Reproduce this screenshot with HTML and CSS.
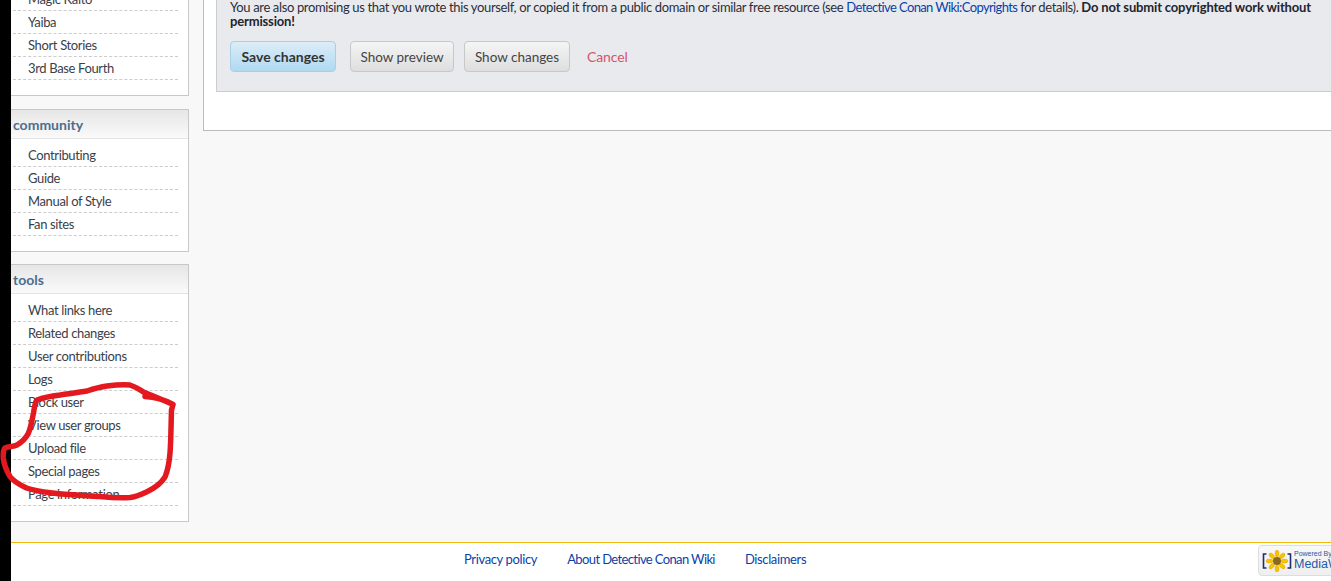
FILE: index.html
```html
<!DOCTYPE html>
<html lang="en">
<head>
<meta charset="utf-8">
<title>Detective Conan Wiki</title>
<link rel="stylesheet" href="styles.css">
</head>
<body>
<div class="strip"></div>
<div class="page">
  <div class="main">
    <aside class="sidebar">
      <section class="box box-first">
        <ul class="list">
          <li>Magic Kaito</li>
          <li>Yaiba</li>
          <li>Short Stories</li>
          <li>3rd Base Fourth</li>
        </ul>
      </section>
      <section class="box">
        <h3 class="box-title">community</h3>
        <ul class="list">
          <li>Contributing</li>
          <li>Guide</li>
          <li>Manual of Style</li>
          <li>Fan sites</li>
        </ul>
      </section>
      <section class="box">
        <h3 class="box-title">tools</h3>
        <ul class="list">
          <li>What links here</li>
          <li>Related changes</li>
          <li>User contributions</li>
          <li>Logs</li>
          <li>Block user</li>
          <li>View user groups</li>
          <li>Upload file</li>
          <li>Special pages</li>
          <li>Page information</li>
        </ul>
      </section>
    </aside>
    <main class="content">
      <div class="edit-panel">
        <p class="notice">You are also promising us that you wrote this yourself, or copied it from a public domain or similar free resource (see <a class="link link-tight" href="#">Detective Conan Wiki:Copyrights</a> for details). <strong>Do not submit copyrighted work without permission!</strong></p>
        <div class="actions">
          <button class="btn btn-save">Save changes</button>
          <button class="btn btn-preview">Show preview</button>
          <button class="btn btn-diff">Show changes</button>
          <a class="cancel" href="#">Cancel</a>
        </div>
      </div>
    </main>
  </div>
  <footer class="footer">
    <nav class="footer-links">
      <a class="link" href="#">Privacy policy</a>
      <a class="link link-tight" href="#">About Detective Conan Wiki</a>
      <a class="link" href="#">Disclaimers</a>
    </nav>
    <div class="badge">
      <svg class="badge-logo" width="30" height="22" viewBox="0 0 30 22" aria-hidden="true">
        <path d="M4.5 4H1.5V18H4.5M25.5 4H28.5V18H25.5" fill="none" stroke="#1d2f6f" stroke-width="1.6"/>
        <g fill="#f6c400" stroke="#e59a00" stroke-width=".4">
          <ellipse cx="15" cy="3.5" rx="2" ry="3.5"/>
          <ellipse cx="15" cy="18.500" rx="2" ry="3.500"/>
          <ellipse cx="7.500" cy="11" rx="3.500" ry="2"/>
          <ellipse cx="22.500" cy="11" rx="3.500" ry="2"/>
          <ellipse cx="9.800" cy="5.800" rx="2" ry="3.300" transform="rotate(-45 9.800 5.800)"/>
          <ellipse cx="20.200" cy="5.800" rx="2" ry="3.300" transform="rotate(45 20.200 5.800)"/>
          <ellipse cx="9.800" cy="16.200" rx="2" ry="3.300" transform="rotate(45 9.800 16.200)"/>
          <ellipse cx="20.200" cy="16.200" rx="2" ry="3.300" transform="rotate(-45 20.200 16.200)"/>
        </g>
        <circle cx="15" cy="11" r="4" fill="#8a6a1c"/>
      </svg>
      <div class="badge-text">
        <span class="badge-small">Powered By</span>
        <span class="badge-large">MediaWiki</span>
      </div>
    </div>
  </footer>
</div>
<svg class="scribble" width="1331" height="581" viewBox="0 0 1331 581" aria-hidden="true">
  <path d="M145 396.500C155 397 165 400 173 404.500L171.500 410C171 425 171 440 170 453C169 465 168 470 165 477C160 485 153 489 146.500 492C140 495 135 497 130 497.500C120 498 110 497.500 100 496.500C85 495.500 70 495 56.500 493.500C45 492 35 491 26.500 488C18 484 13 481 10 476.500C6 470 4 465 3.300 458C3 453 3 450 5 448C9 446 13 447 17 445C22 442 26 438 28.500 433C31 427 32 420 33.500 413C34.500 407 35 402 37 400C45 397 52 396 60 395C70 393.500 78 392.500 87 391C93 389 100 387 107 386C115 385 123 384.500 130 385C136 387 140 390 143.500 392C153 396 163 400 173 404.500" fill="none" stroke="#e3191f" stroke-width="5.500" stroke-linecap="round" stroke-linejoin="round"/>
</svg>
</body>
</html>
```

FILE: styles.css
```css
* {
  box-sizing: border-box;
}

html,
body {
  margin: 0;
  height: 581px;
  overflow: hidden;
}

body {
  display: flex;
  background: #f8f8f8;
  color: #333;
  font-family: "Lato", "Liberation Sans", sans-serif;
  font-size: 13px;
  letter-spacing: -0.36px;
}

.strip {
  width: 11px;
  flex: none;
  background: #000;
}

.page {
  flex: 1;
  min-width: 0;
  display: flex;
  flex-direction: column;
  overflow: hidden;
}

.main {
  height: 542px;
  flex: none;
  display: flex;
  align-items: flex-start;
  gap: 14px;
}

.sidebar {
  width: 178px;
  flex: none;
  margin-top: -12px;
  display: flex;
  flex-direction: column;
  gap: 12.5px;
}

.box {
  background: #fff;
  border: 1px solid #c8c8c8;
  border-left: 0;
  padding-bottom: 15px;
}

.box-first {
  border-top: 0;
}

.box-title {
  margin: 0;
  height: 29px;
  padding-left: 2px;
  line-height: 29px;
  font-size: 14px;
  letter-spacing: 0;
  font-weight: 700;
  color: #4d6d8d;
  background: linear-gradient(#e6e6e6, #fafafa);
  border-bottom: 1px solid #e4e4e4;
}

.box-title + .list {
  margin-top: 5px;
}

.list {
  margin: 0 10px 0 2px;
  padding: 0;
  list-style: none;
}

.list li {
  height: 23px;
  padding-left: 15px;
  line-height: 22px;
  border-bottom: 1px dashed #ccc;
  color: #3a3f4a;
}

.content {
  flex: 1;
  height: 131px;
  min-width: 0;
  padding: 0 0 38px 12px;
  margin-right: -2px;
  background: #fff;
  border: 1px solid #bbb;
  border-width: 0 0 1px 1px;
}

.edit-panel {
  height: 92px;
  padding: 0 13px 0 13px;
  background: #e9eaee;
  border: 1px solid #ccc;
  border-width: 0 0 1px 1px;
}

.notice {
  margin: 0;
  line-height: 14px;
  color: #2b2f3a;
}

.notice strong {
  color: #22252e;
  letter-spacing: -0.16px;
}

.link {
  color: #0b3fa8;
  text-decoration: none;
}

.link-tight {
  letter-spacing: -0.62px;
}

.actions {
  margin-top: 13px;
  display: flex;
  align-items: center;
}

.btn {
  height: 31px;
  padding: 0;
  border: 1px solid #c8c8c8;
  border-radius: 4px;
  background: linear-gradient(#f5f5f5, #dedede);
  color: #444;
  font: inherit;
  font-size: 13.5px;
  letter-spacing: 0;
}

.btn-save {
  width: 106px;
  margin-right: 14px;
  font-size: 14px;
  font-weight: 700;
  color: #333;
  border-color: #a9cfe4;
  background: linear-gradient(#dcedf8, #b0d9f0);
}

.btn-preview {
  width: 104px;
  margin-right: 10px;
}

.btn-diff {
  width: 106px;
  margin-right: 17px;
}

.cancel {
  color: #d4566a;
  text-decoration: none;
  font-size: 14px;
  letter-spacing: -0.1px;
}

.footer {
  flex: 1;
  display: flex;
  align-items: flex-start;
  padding-left: 453px;
  background: #fff;
  border-top: 1px solid #f2b90f;
}

.footer-links {
  display: flex;
  gap: 30px;
  line-height: 32px;
}

.badge {
  flex: none;
  width: 88px;
  height: 31px;
  margin: 2px -15px 0 auto;
  padding-left: 3px;
  display: flex;
  align-items: center;
  gap: 2px;
  background: linear-gradient(#f8f8f8, #efefef);
  border: 1px solid #ddd;
  border-radius: 4px;
}

.badge-logo {
  flex: none;
}

.badge-text {
  display: flex;
  flex-direction: column;
  font-family: "Liberation Sans", sans-serif;
  letter-spacing: 0;
  color: #1f5aa5;
}

.badge-small {
  font-size: 7px;
  line-height: 8px;
}

.badge-large {
  font-size: 12.5px;
  line-height: 13px;
}

.scribble {
  position: absolute;
  left: 0;
  top: 0;
  pointer-events: none;
}
```
